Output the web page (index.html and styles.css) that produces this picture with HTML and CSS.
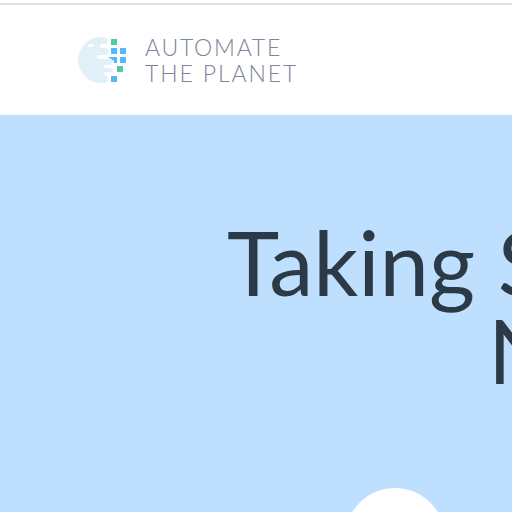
FILE: index.html
```html
<!DOCTYPE html>
<html lang="en">
<head>
<meta charset="utf-8">
<title>Automate The Planet</title>
<link rel="stylesheet" href="styles.css">
</head>
<body>
<header class="site-header">
  <a class="brand" href="#">
    <svg class="brand-mark" width="50" height="48" viewBox="0 0 50 48" aria-hidden="true">
      <path class="mark-disc" d="M24 1H27a3.500 3.500 0 0 1 0 7H25a2 2 0 0 0 0 4H28a3.500 3.500 0 0 1 0 7H22a2 2 0 0 0 0 4H32a3 3 0 0 1 0 6H28a1.500 1.500 0 0 0 0 3H34a2 2 0 0 1 0 4H28a1.500 1.500 0 0 0 0 3H27a4 4 0 0 1 0 8H24A23 23 0 0 1 24 1z"/>
      <rect class="mark-hole" x="11" y="8" width="6" height="3" rx="1.500"/>
      <rect class="mark-green" x="34" y="3" width="6" height="6"/>
      <rect class="mark-blue" x="34" y="12" width="6" height="6"/>
      <rect class="mark-blue" x="43" y="12" width="6" height="6"/>
      <path class="mark-blue" d="M31 21h9v6h-3v-2z"/>
      <rect class="mark-blue" x="43" y="21" width="6" height="6"/>
      <rect class="mark-green" x="40" y="30" width="6" height="6"/>
      <rect class="mark-blue" x="34" y="40" width="6" height="6"/>
    </svg>
    <span class="brand-name">
      <span class="brand-line brand-line-top">AUTOMATE</span>
      <span class="brand-line brand-line-bottom">THE PLANET</span>
    </span>
  </a>
</header>
<main class="hero">
  <h1 class="hero-title">
    <span class="title-line title-line-one">Taking Screenshots</span>
    <span class="title-line title-line-two">N</span>
  </h1>
  <div class="hero-badge"></div>
</main>
</body>
</html>
```
FILE: styles.css
```css
html, body {
  margin: 0;
  padding: 0;
  width: 512px;
  height: 512px;
  overflow: hidden;
  background: #fff;
}

body {
  font-family: "Lato", "Liberation Sans", sans-serif;
  padding-top: 3px;
  box-sizing: border-box;
}

.site-header {
  height: 79px;
  border-top: 2px solid #e0e0e0;
  background: #fff;
  padding: 31px 0 0 77px;
}

.brand {
  display: flex;
  align-items: flex-start;
  gap: 18px;
  text-decoration: none;
}

.brand-mark {
  flex: none;
}

.mark-disc { fill: #e1f0f6; }
.mark-hole { fill: #fff; }
.mark-green { fill: #4fcbaa; }
.mark-blue { fill: #52b7fb; }

.brand-name {
  display: flex;
  flex-direction: column;
  color: #7d8499;
  font-weight: 300;
  font-size: 23px;
  line-height: 26px;
  margin-top: -2px;
  white-space: nowrap;
}

.brand-line-top { letter-spacing: 1.75px; }
.brand-line-bottom { letter-spacing: 1.9px; }

.hero {
  height: 397px;
  background: #bfdfff;
  overflow: hidden;
}

.hero-title {
  margin: 0;
  padding-top: 103px;
  font-size: 88.6px;
  font-weight: 400;
  line-height: 88px;
  color: #2b3a46;
  white-space: nowrap;
}

.title-line {
  display: block;
}

.title-line-one { margin-left: 227px; }
.title-line-two { margin-left: 488px; }

.hero-badge {
  width: 100px;
  height: 100px;
  margin: 94px 0 0 345px;
  border-radius: 50%;
  background: #fff;
}
```
